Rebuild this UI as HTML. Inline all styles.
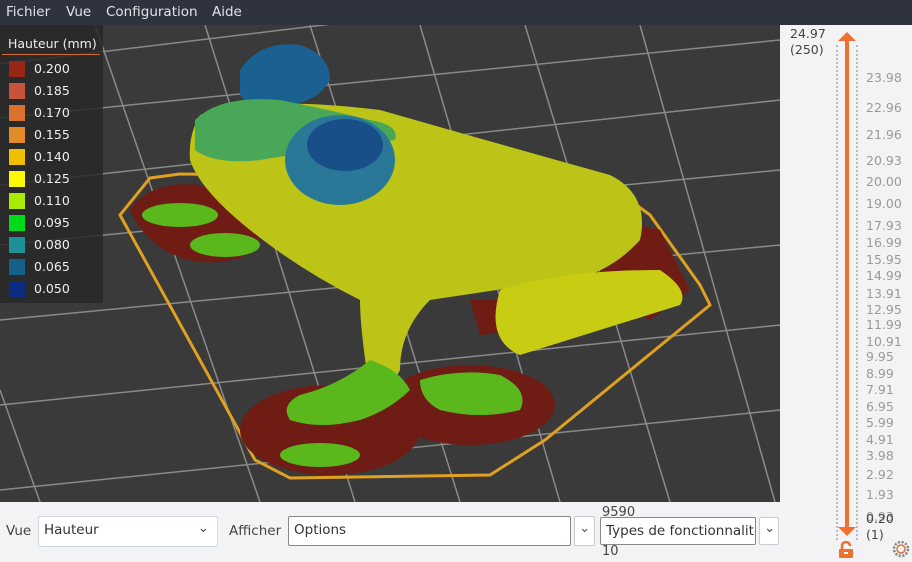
<!DOCTYPE html>
<html><head><meta charset="utf-8"><style>
*{margin:0;padding:0;box-sizing:border-box}
body{width:912px;height:562px;overflow:hidden;background:#f3f3f5;font-family:"DejaVu Sans","Liberation Sans",sans-serif;position:relative}
.menu{position:absolute;left:0;top:0;width:912px;height:25px;background:#2f333d;color:#dfe3ea;font-size:13.5px}
.menu span{position:absolute;top:4px}
.vp{position:absolute;left:0;top:25px;width:780px;height:477px;background:#3a3a3a;overflow:hidden}
.leg{position:absolute;left:0;top:25px;width:103px;height:278px;background:rgba(40,40,40,0.85);color:#eee;font-size:12.5px}
.leg .t{position:absolute;left:8px;top:11px}
.leg .ln{position:absolute;left:2px;top:29px;width:98px;height:1px;background:#d06a30}
.row{position:absolute;left:9px;width:16px;height:16px}
.lab{position:absolute;left:34px}
.right{position:absolute;left:780px;top:25px;width:132px;height:537px;background:#f3f3f5}
.tk{position:absolute;left:86px;color:#9a9a9a;font-size:12.5px}
.bot{font-size:13.5px;color:#444;position:absolute}
.box{position:absolute;background:#fff;border:1px solid #c8ccd4;border-radius:2px;font-size:13.5px;color:#333;padding:5px 5px}
</style></head><body>
<div class="menu"><span style="left:6px">Fichier</span><span style="left:66px">Vue</span><span style="left:106px">Configuration</span><span style="left:212px">Aide</span></div>
<div class="vp">
<svg width="780" height="477" viewBox="0 25 780 477">
<g stroke="#8a8a8a" stroke-width="1.5" fill="none">
<line x1="0" y1="64" x2="780" y2="-30"/><line x1="0" y1="118" x2="780" y2="40"/><line x1="0" y1="185" x2="780" y2="100"/>
<line x1="0" y1="245" x2="780" y2="170"/><line x1="0" y1="320" x2="780" y2="245"/><line x1="0" y1="405" x2="780" y2="325"/>
<line x1="0" y1="490" x2="780" y2="410"/>
<line x1="95" y1="25" x2="260" y2="502"/><line x1="205" y1="25" x2="355" y2="502"/><line x1="310" y1="25" x2="460" y2="502"/>
<line x1="420" y1="25" x2="560" y2="502"/><line x1="525" y1="25" x2="670" y2="502"/><line x1="640" y1="25" x2="775" y2="502"/>
<line x1="0" y1="390" x2="40" y2="502"/>
</g>
<path d="M150 178 L180 174 L600 178 L650 215 L700 285 L710 305 L545 440 L490 475 L290 478 L255 460 L120 215 Z" fill="none" stroke="#e0a020" stroke-width="3"/>
<g fill="#6e1c14">
<path d="M130 210 Q150 180 200 185 Q240 200 260 240 Q250 265 200 262 Q150 255 130 210Z"/>
<ellipse cx="330" cy="430" rx="90" ry="45"/>
<ellipse cx="470" cy="405" rx="85" ry="40"/>
<path d="M600 215 L660 230 L690 290 L650 320 L600 300Z"/>
<path d="M470 300 L560 300 L540 330 L480 335Z"/>
</g>
<ellipse cx="180" cy="215" rx="38" ry="12" fill="#5ab81c"/>
<ellipse cx="225" cy="245" rx="35" ry="12" fill="#5ab81c"/>
<path d="M200 115 Q260 95 380 110 Q520 150 610 175 Q650 195 640 240 Q600 285 530 285 L430 300 Q400 330 400 370 Q390 390 370 392 Q360 330 360 300 Q300 270 250 230 Q200 190 190 160 Q188 135 200 115Z" fill="#bcc418"/>
<path d="M500 290 Q560 270 660 270 Q690 290 680 305 Q600 330 520 355 Q485 340 500 290Z" fill="#c8cc12"/>
<path d="M370 360 Q400 370 410 390 Q390 410 360 420 Q320 430 290 420 Q280 405 300 395 Q340 385 370 360Z" fill="#5ab81c"/>
<path d="M420 380 Q460 368 500 375 Q530 390 520 410 Q480 420 440 410 Q420 400 420 380Z" fill="#5ab81c"/>
<ellipse cx="320" cy="455" rx="40" ry="12" fill="#5ab81c"/>
<path d="M240 70 Q260 40 300 45 Q330 55 330 80 Q320 100 290 105 Q250 110 240 95Z" fill="#1a6090"/>
<path d="M195 120 Q220 95 280 100 Q330 110 370 120 Q400 125 395 140 Q320 150 260 160 Q215 165 195 150Z" fill="#48a858"/>
<ellipse cx="340" cy="160" rx="55" ry="45" fill="#2a7898"/>
<ellipse cx="345" cy="145" rx="38" ry="26" fill="#1a4e88"/>
</svg>
</div>
<div class="leg"><div class="t">Hauteur (mm)</div><div class="ln"></div>
<div class="row" style="top:36px;background:#962718"></div><div class="lab" style="top:36px">0.200</div>
<div class="row" style="top:58px;background:#c8533a"></div><div class="lab" style="top:58px">0.185</div>
<div class="row" style="top:80px;background:#d8722e"></div><div class="lab" style="top:80px">0.170</div>
<div class="row" style="top:102px;background:#e28a28"></div><div class="lab" style="top:102px">0.155</div>
<div class="row" style="top:124px;background:#f0c000"></div><div class="lab" style="top:124px">0.140</div>
<div class="row" style="top:146px;background:#fafa00"></div><div class="lab" style="top:146px">0.125</div>
<div class="row" style="top:168px;background:#aaec00"></div><div class="lab" style="top:168px">0.110</div>
<div class="row" style="top:190px;background:#00dc18"></div><div class="lab" style="top:190px">0.095</div>
<div class="row" style="top:212px;background:#1e9098"></div><div class="lab" style="top:212px">0.080</div>
<div class="row" style="top:234px;background:#15618c"></div><div class="lab" style="top:234px">0.065</div>
<div class="row" style="top:256px;background:#0c2e82"></div><div class="lab" style="top:256px">0.050</div>
</div>
<div class="right">
<div style="position:absolute;left:10px;top:1px;font-size:12.5px;color:#444;line-height:16px">24.97<br>(250)</div>
<div style="position:absolute;left:56px;top:20px;width:0;height:495px;border-left:2px dotted #bbb"></div>
<div style="position:absolute;left:76px;top:20px;width:0;height:495px;border-left:2px dotted #bbb"></div>
<div style="position:absolute;left:65px;top:15px;width:4px;height:492px;background:#f07030"></div>
<div style="position:absolute;left:58px;top:7px;width:0;height:0;border-left:9px solid transparent;border-right:9px solid transparent;border-bottom:9px solid #f07030"></div>
<div style="position:absolute;left:58px;top:502px;width:0;height:0;border-left:9px solid transparent;border-right:9px solid transparent;border-top:9px solid #f07030"></div>
<div class="tk" style="top:45px">23.98</div><div class="tk" style="top:75px">22.96</div><div class="tk" style="top:102px">21.96</div>
<div class="tk" style="top:128px">20.93</div><div class="tk" style="top:149px">20.00</div><div class="tk" style="top:171px">19.00</div>
<div class="tk" style="top:193px">17.93</div><div class="tk" style="top:210px">16.99</div><div class="tk" style="top:227px">15.95</div>
<div class="tk" style="top:243px">14.99</div><div class="tk" style="top:261px">13.91</div><div class="tk" style="top:277px">12.95</div>
<div class="tk" style="top:292px">11.99</div><div class="tk" style="top:309px">10.91</div><div class="tk" style="top:324px">9.95</div>
<div class="tk" style="top:341px">8.99</div><div class="tk" style="top:357px">7.91</div><div class="tk" style="top:374px">6.95</div>
<div class="tk" style="top:390px">5.99</div><div class="tk" style="top:407px">4.91</div><div class="tk" style="top:423px">3.98</div>
<div class="tk" style="top:442px">2.92</div><div class="tk" style="top:462px">1.93</div><div class="tk" style="top:484px">0.93</div>
<div style="position:absolute;left:86px;top:486px;font-size:12.5px;color:#444;line-height:16px">0.20<br>(1)</div>
<svg style="position:absolute;left:58px;top:516px" width="16" height="18" viewBox="0 0 16 18"><path d="M4 8 V5 A4 4 0 0 1 12 5" fill="none" stroke="#f07030" stroke-width="2.5"/><rect x="1" y="8" width="14" height="9" rx="1" fill="#f07030"/><rect x="6" y="11" width="4" height="2" fill="#fff"/></svg>
<svg style="position:absolute;left:112px;top:515px" width="18" height="18" viewBox="0 0 18 18"><circle cx="9" cy="9" r="7" fill="none" stroke="#888" stroke-width="2.5" stroke-dasharray="2.2 1.5"/><circle cx="9" cy="9" r="4" fill="none" stroke="#e07030" stroke-width="1.5"/></svg>
</div>
<div class="bot" style="left:6px;top:523px">Vue</div>
<div class="box" style="left:38px;top:516px;width:180px;height:31px;border-color:#cfd6e4">Hauteur<span style="position:absolute;right:8px;top:3px;color:#555">⌄</span></div>
<div class="bot" style="left:229px;top:523px">Afficher</div>
<div class="box" style="left:288px;top:516px;width:283px;height:30px;border-color:#888">Options</div>
<div class="box" style="left:574px;top:516px;width:21px;height:30px"><span style="position:absolute;left:4px;top:3px;color:#555">⌄</span></div>
<div class="bot" style="left:602px;top:506px;font-size:13px;line-height:14px">9590</div>
<div class="box" style="left:600px;top:517px;width:156px;height:28px;border-color:#888;overflow:hidden;white-space:nowrap">Types de fonctionnalités</div>
<div class="box" style="left:759px;top:517px;width:20px;height:28px"><span style="position:absolute;left:4px;top:2px;color:#555">⌄</span></div>
<div class="bot" style="left:602px;top:544px;font-size:13px">10</div>
</body></html>
